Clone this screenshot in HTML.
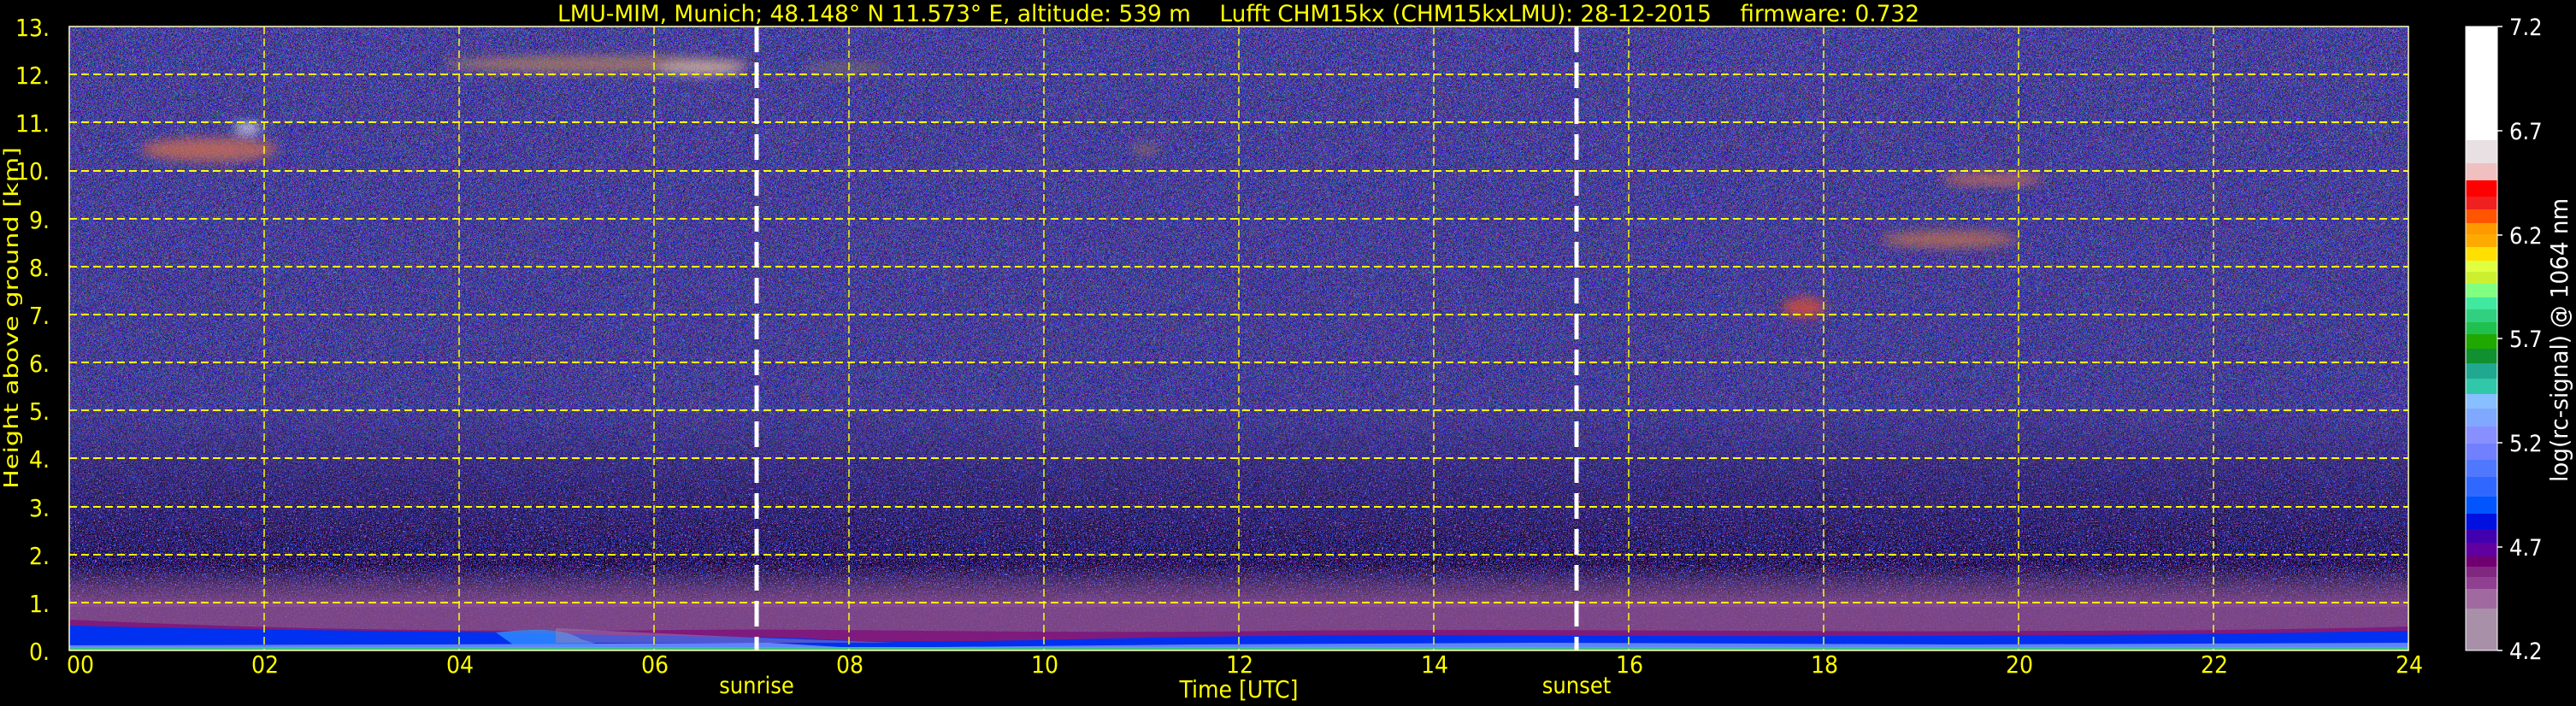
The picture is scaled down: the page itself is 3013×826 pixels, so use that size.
<!DOCTYPE html>
<html><head><meta charset="utf-8">
<style>
html,body{margin:0;padding:0;background:#000;}
svg{display:block;}
text{font-family:"DejaVu Sans Condensed","DejaVu Sans","Liberation Sans",sans-serif;}
</style></head>
<body>
<svg width="3013" height="826" viewBox="0 0 3013 826" xmlns="http://www.w3.org/2000/svg">
<defs>
<filter id="nzU" x="0" y="0" width="100%" height="100%" color-interpolation-filters="sRGB">
<feTurbulence type="fractalNoise" baseFrequency="0.6" numOctaves="1" seed="3" result="t"/>
<feComponentTransfer in="t">
<feFuncR type="discrete" tableValues="0 0.5 0.1 0.35 0 0.55 0.15 0.4 0.1 0.6 0 0.35"/>
<feFuncG type="discrete" tableValues="0 0.35 0.1 0.45 0 0.4 0.1 0.55 0.1 0.6 0.1 0.35"/>
<feFuncB type="discrete" tableValues="0.1 0.95 0.3 1 0.15 0.85 0.4 0.95 0.4 0.95 0.1 0.85"/>
<feFuncA type="discrete" tableValues="1"/>
</feComponentTransfer>
</filter>
<filter id="nzL" x="0" y="0" width="100%" height="100%" color-interpolation-filters="sRGB">
<feTurbulence type="fractalNoise" baseFrequency="0.6" numOctaves="1" seed="5" result="t"/>
<feColorMatrix in="t" type="matrix" values="1 0 0 0 0  1 0 0 0 0  1 0 0 0 0  0 0 0 0 1" result="g"/>
<feComponentTransfer in="g">
<feFuncR type="discrete" tableValues="0 0.7 0 0 0.5 0 0.2 0 0.7 0 0 0.45"/>
<feFuncG type="discrete" tableValues="0 0.5 0 0 0 0 0.3 0 0.5 0 0 0.1"/>
<feFuncB type="discrete" tableValues="0 0.7 0 0 0.5 0 1 0 0.7 0 0 0.6"/>
</feComponentTransfer>
</filter>
<filter id="bl"><feGaussianBlur stdDeviation="6"/></filter>
<linearGradient id="fadeU" x1="0" y1="31" x2="0" y2="651" gradientUnits="userSpaceOnUse">
<stop offset="0" stop-color="#fff" stop-opacity="1"/>
<stop offset="0.72" stop-color="#fff" stop-opacity="0.9"/>
<stop offset="0.85" stop-color="#fff" stop-opacity="0.45"/>
<stop offset="1" stop-color="#fff" stop-opacity="0.1"/>
</linearGradient>
<mask id="mU"><rect x="81" y="31" width="2736" height="620" fill="url(#fadeU)"/></mask>
<linearGradient id="bl1" x1="0" y1="0" x2="0" y2="1">
<stop offset="0" stop-color="#8a5a90" stop-opacity="0"/>
<stop offset="0.5" stop-color="#8a5a90" stop-opacity="0.45"/>
<stop offset="1" stop-color="#904f90" stop-opacity="0.85"/>
</linearGradient>
</defs>

<rect x="81" y="31" width="2736" height="730" filter="url(#nzL)"/>
<rect x="81" y="31" width="2736" height="620" filter="url(#nzU)" mask="url(#mU)"/>
<rect x="81" y="660" width="2736" height="50" fill="url(#bl1)"/>
<rect x="81" y="705" width="2736" height="56" fill="#8a4e8e" opacity="0.85"/>

<path d="M81,725 C300,735 500,740 800,737 C1000,735 1200,742 1500,738 C1800,735 2100,740 2400,738 C2600,738 2750,735 2817,733 L2817,761 L81,761Z" fill="#80107a" opacity="0.8"/>
<path d="M81,732 C200,735 400,738 600,740 C800,746 900,743 1000,750 C1200,752 1300,745 1500,744 C1700,742 1900,745 2200,744 C2500,744 2700,740 2817,738 L2817,761 L81,761Z" fill="#0030f0"/>
<path d="M81,755 L500,754 L900,752 L1000,758 L1400,754 L1800,752 L2300,754 L2817,752 L2817,758 L81,758Z" fill="#8aa8ff" opacity="0.7"/>
<path d="M580,740 C630,735 660,735 680,748 L700,754 L600,754Z" fill="#3090ff" opacity="0.8"/>
<path d="M650,735 C750,740 850,745 940,748 L1050,752 L650,752Z" fill="#a080b0" opacity="0.5"/>
<rect x="81" y="757" width="2736" height="4" fill="#40c080"/>

<g filter="url(#bl)" opacity="0.75">
<ellipse cx="245" cy="175" rx="80" ry="14" fill="#d07050"/>
<ellipse cx="290" cy="150" rx="16" ry="6" fill="#ffffff"/>
<ellipse cx="700" cy="75" rx="180" ry="10" fill="#b08060"/>
<ellipse cx="820" cy="80" rx="50" ry="8" fill="#e0c0a0"/>
<ellipse cx="990" cy="80" rx="50" ry="6" fill="#807060"/>
<ellipse cx="2110" cy="360" rx="25" ry="12" fill="#e05030"/>
<ellipse cx="2280" cy="280" rx="80" ry="10" fill="#c07050"/>
<ellipse cx="2330" cy="210" rx="60" ry="7" fill="#d07050"/>
<ellipse cx="1340" cy="175" rx="16" ry="5" fill="#a07060"/>
</g>

<g stroke="#ffff00" stroke-width="2" stroke-dasharray="9,5" fill="none">
<path d="M81,705H2817M81,649H2817M81,593H2817M81,536H2817M81,480H2817M81,424H2817M81,368H2817M81,312H2817M81,256H2817M81,200H2817M81,143H2817M81,87H2817"/>
<path d="M309,31V761M537,31V761M765,31V761M993,31V761M1221,31V761M1449,31V761M1677,31V761M1905,31V761M2133,31V761M2361,31V761M2589,31V761" stroke-width="1.5"/>
</g>
<g stroke="#ffffff" stroke-width="5" stroke-dasharray="30,12">
<path d="M885,31V761M1844,31V761"/>
</g>
<rect x="81" y="31" width="2736" height="730" fill="none" stroke="#ffffc0" stroke-width="1.5"/>

<text x="652" y="25" font-size="27" fill="#ffff00" textLength="1593" lengthAdjust="spacingAndGlyphs" xml:space="preserve" style="white-space:pre">LMU-MIM, Munich; 48.148° N 11.573° E, altitude: 539 m    Lufft CHM15kx (CHM15kxLMU): 28-12-2015    firmware: 0.732</text>

<g font-size="28" fill="#ffff00" text-anchor="end">
<text x="58" y="42">13.</text><text x="58" y="98">12.</text><text x="58" y="154">11.</text><text x="58" y="210">10.</text>
<text x="58" y="267">9.</text><text x="58" y="323">8.</text><text x="58" y="379">7.</text><text x="58" y="435">6.</text>
<text x="58" y="491">5.</text><text x="58" y="547">4.</text><text x="58" y="604">3.</text><text x="58" y="660">2.</text>
<text x="58" y="716">1.</text><text x="58" y="772">0.</text>
</g>
<text transform="translate(21,372) rotate(-90)" font-size="23" fill="#ffff00" text-anchor="middle" textLength="400" lengthAdjust="spacingAndGlyphs">Height above ground [km]</text>

<g font-size="28" fill="#ffff00">
<text x="78" y="787">00</text><text x="294" y="787">02</text><text x="522" y="787">04</text><text x="750" y="787">06</text>
<text x="978" y="787">08</text><text x="1206" y="787">10</text><text x="1434" y="787">12</text><text x="1662" y="787">14</text>
<text x="1890" y="787">16</text><text x="2118" y="787">18</text><text x="2346" y="787">20</text><text x="2574" y="787">22</text>
<text x="2802" y="787">24</text>
</g>
<text x="885" y="811" font-size="27" fill="#ffff00" text-anchor="middle">sunrise</text>
<text x="1844" y="811" font-size="27" fill="#ffff00" text-anchor="middle">sunset</text>
<text x="1449" y="816" font-size="28" fill="#ffff00" text-anchor="middle">Time [UTC]</text>

<g>
<rect x="2884" y="31" width="37" height="133" fill="#ffffff"/>
<rect x="2884" y="164" width="37" height="27" fill="#e8e0e2"/>
<rect x="2884" y="191" width="37" height="20" fill="#f0c0c0"/>
<rect x="2884" y="211" width="37" height="19" fill="#ff0000"/>
<rect x="2884" y="230" width="37" height="15" fill="#f02020"/>
<rect x="2884" y="245" width="37" height="16" fill="#ff5500"/>
<rect x="2884" y="261" width="37" height="13" fill="#ff9900"/>
<rect x="2884" y="274" width="37" height="15" fill="#ffaa00"/>
<rect x="2884" y="289" width="37" height="16" fill="#ffe000"/>
<rect x="2884" y="305" width="37" height="13" fill="#e0ff40"/>
<rect x="2884" y="318" width="37" height="14" fill="#ccf030"/>
<rect x="2884" y="332" width="37" height="16" fill="#80ff80"/>
<rect x="2884" y="348" width="37" height="14" fill="#40e8a0"/>
<rect x="2884" y="362" width="37" height="15" fill="#30d080"/>
<rect x="2884" y="377" width="37" height="14" fill="#20c050"/>
<rect x="2884" y="391" width="37" height="17" fill="#20a800"/>
<rect x="2884" y="408" width="37" height="17" fill="#109030"/>
<rect x="2884" y="425" width="37" height="18" fill="#20a890"/>
<rect x="2884" y="443" width="37" height="18" fill="#30c8a8"/>
<rect x="2884" y="461" width="37" height="17" fill="#88c0ff"/>
<rect x="2884" y="478" width="37" height="21" fill="#80a8ff"/>
<rect x="2884" y="499" width="37" height="20" fill="#8890ff"/>
<rect x="2884" y="519" width="37" height="19" fill="#7080ff"/>
<rect x="2884" y="538" width="37" height="20" fill="#5078ff"/>
<rect x="2884" y="558" width="37" height="23" fill="#3068ff"/>
<rect x="2884" y="581" width="37" height="20" fill="#0055ff"/>
<rect x="2884" y="601" width="37" height="18" fill="#0010e0"/>
<rect x="2884" y="619" width="37" height="16" fill="#4000b0"/>
<rect x="2884" y="635" width="37" height="16" fill="#6000a0"/>
<rect x="2884" y="651" width="37" height="12" fill="#700070"/>
<rect x="2884" y="663" width="37" height="12" fill="#802880"/>
<rect x="2884" y="675" width="37" height="14" fill="#904090"/>
<rect x="2884" y="689" width="37" height="23" fill="#a06aa0"/>
<rect x="2884" y="712" width="37" height="49" fill="#a890a8"/>
<rect x="2884" y="31" width="37" height="730" fill="none" stroke="#ffffff" stroke-width="1"/>
</g>
<g stroke="#ffffff" stroke-width="1.5">
<path d="M2921,31h6M2921,153h6M2921,275h6M2921,396h6M2921,518h6M2921,640h6M2921,761h6"/>
</g>
<g font-size="27" fill="#ffffff">
<text x="2935" y="41">7.2</text><text x="2935" y="163">6.7</text><text x="2935" y="285">6.2</text>
<text x="2935" y="406">5.7</text><text x="2935" y="528">5.2</text><text x="2935" y="650">4.7</text>
<text x="2935" y="771">4.2</text>
</g>
<text transform="translate(3003,398) rotate(-90)" font-size="28" fill="#ffffff" text-anchor="middle" textLength="332" lengthAdjust="spacingAndGlyphs">log(rc-signal) @ 1064 nm</text>
</svg>
</body></html>
